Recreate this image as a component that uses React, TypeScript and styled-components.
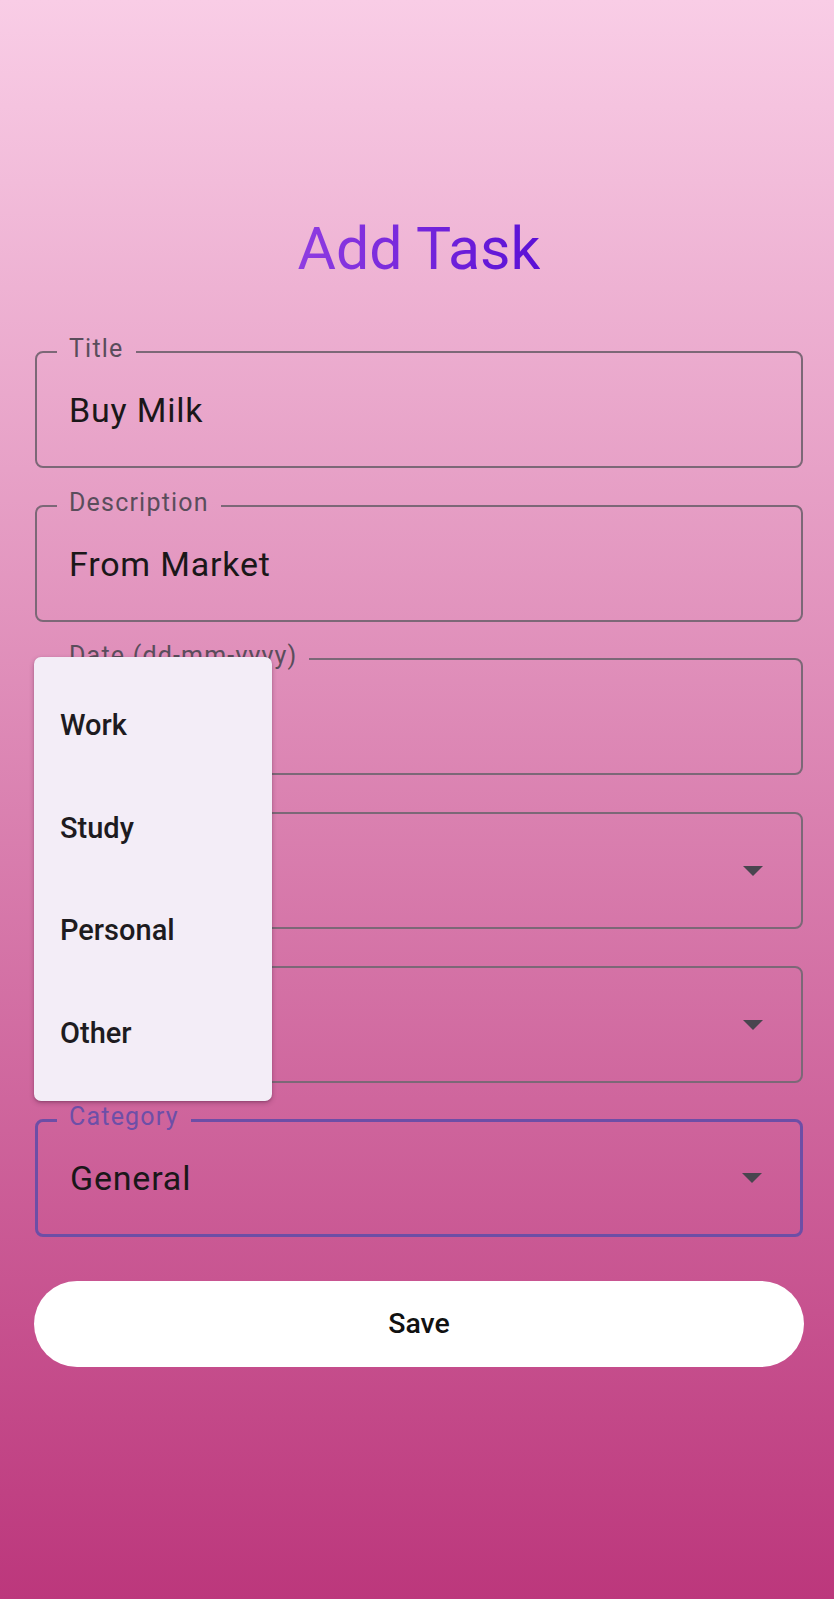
import React, { useState } from 'react';
import styled, { createGlobalStyle } from 'styled-components';

const GlobalStyle = createGlobalStyle`
    html, body {
        margin: 0;
        padding: 0;
    }
    body {
        font-family: Roboto, "Liberation Sans", sans-serif;
    }
`

const Screen = styled.div`
    min-height: 1599px;
    box-sizing: border-box;
    padding: 214px 31px 0 35px;
    background: linear-gradient(180deg, #f9cde6 0%, #bc377c 100%);
`

const Heading = styled.h1`
    display: block;
    width: fit-content;
    margin: 0 auto 53px;
    font-size: 59px;
    font-weight: 400;
    line-height: 1.172;
    background: linear-gradient(90deg, #8f3ce1 0%, #5a10d6 100%);
    -webkit-background-clip: text;
    background-clip: text;
    color: transparent;
`

const Form = styled.div`
    position: relative;
    display: flex;
    flex-direction: column;
    gap: 21.6px;
`

const Box = styled.fieldset<{ $focused?: boolean }>`
    margin: 0;
    padding: 0;
    min-width: 0;
    border: ${p => p.$focused ? '3px solid #6d4ea6' : '2px solid #7c6877'};
    border-radius: 8px;
`

const Legend = styled.legend<{ $focused?: boolean }>`
    margin-left: ${p => p.$focused ? '19px' : '20px'};
    padding: 0 12px 6px;
    font-size: 25px;
    line-height: 26px;
    letter-spacing: 1.2px;
    color: ${p => p.$focused ? '#6d4fa8' : '#5a4d5b'};
`

const Row = styled.div`
    display: flex;
    align-items: center;
    justify-content: space-between;
    height: 98px;
    box-sizing: border-box;
    padding: 0 38px 14px 32px;
`

const Value = styled.span`
    font-size: 34px;
    letter-spacing: 0.8px;
    color: #1a1719;
`

const Menu = styled.div`
    position: absolute;
    top: 321px;
    left: -1px;
    width: 238px;
    box-sizing: border-box;
    padding: 17px 0;
    background: #f3edf7;
    border-radius: 7px;
    box-shadow: 0 2px 5px rgba(60, 20, 50, 0.3), 0 1px 2px rgba(60, 20, 50, 0.2);
    z-index: 2;
`

const MenuItem = styled.div`
    display: flex;
    align-items: center;
    height: 102.5px;
    padding-left: 26px;
    font-size: 29px;
    font-weight: 500;
    color: #1d1b20;
`

const SaveButton = styled.button`
    margin: 21.8px -1px 0 -1px;
    height: 86px;
    border: none;
    border-radius: 43px;
    background: #ffffff;
    font-family: Roboto, "Liberation Sans", sans-serif;
    font-size: 28.5px;
    font-weight: 500;
    color: #111111;
    cursor: pointer;
`

const Arrow = () => (
    <svg width="20" height="10" viewBox="0 0 20 10">
        <polygon points="0,0 20,0 10,10" fill="#49454f" />
    </svg>
)

type FieldProps = {
    label: string;
    value?: string;
    select?: boolean;
    focused?: boolean;
}

const Field = ({ label, value, select, focused }: FieldProps) => (
    <Box $focused={focused}>
        <Legend $focused={focused}>{label}</Legend>
        <Row>
            <Value>{value}</Value>
            {select ? <Arrow /> : null}
        </Row>
    </Box>
)

const App = () => {
    const [ category ] = useState('General');
    const options = ['Work', 'Study', 'Personal', 'Other'];

    return (
        <Screen>
            <GlobalStyle />
            <Heading>Add Task</Heading>
            <Form>
                <Field label="Title" value="Buy Milk" />
                <Field label="Description" value="From Market" />
                <Field label="Date (dd-mm-yyyy)" />
                <Field label="Priority" select />
                <Field label="Status" select />
                <Field label="Category" value={category} select focused />
                <Menu>
                    {options.map(o => <MenuItem key={o}>{o}</MenuItem>)}
                </Menu>
                <SaveButton>Save</SaveButton>
            </Form>
        </Screen>
    );
};

export default App;
